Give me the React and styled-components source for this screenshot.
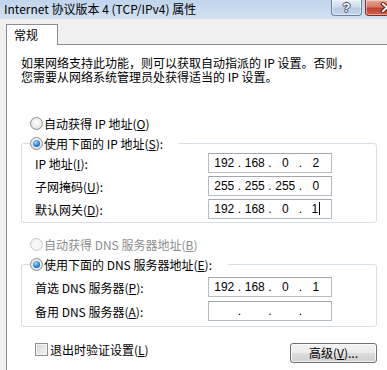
import React from 'react';
import styled, { createGlobalStyle } from 'styled-components';

const GlobalStyle = createGlobalStyle`
  body {
    margin: 0;
    overflow: hidden;
    background: #f0f0f0;
  }
`;

const Window = styled.div`
  width: 387px;
  height: 370px;
  overflow: hidden;
  display: flex;
  flex-direction: column;
  background: #f0f0f0;
  font-family: "Noto Sans CJK SC", "Liberation Sans", sans-serif;
  font-size: 12px;
  color: #000;
`;

const TitleBar = styled.div`
  height: 19px;
  flex: none;
  display: flex;
  align-items: flex-start;
  background: linear-gradient(to bottom, #c0d4ec, #d3e1f1);
`;

const Title = styled.div`
  flex: 1;
  padding-left: 4px;
  line-height: 17px;
  white-space: nowrap;
`;

const CaptionButton = styled.div`
  flex: none;
  width: ${({ $w }) => $w}px;
  height: 16px;
  box-sizing: border-box;
  margin-right: ${({ $mr }) => $mr}px;
  border: 1px solid ${({ $close }) => ($close ? '#7a3226' : '#6f8198')};
  border-top: none;
  border-radius: 0 0 4px 4px;
  box-shadow: inset 0 0 0 1px rgba(255, 255, 255, 0.45);
  background: ${({ $close }) =>
    $close
      ? 'linear-gradient(to bottom, #e8a696 0%, #d67a66 45%, #c2422c 55%, #cf6450 100%)'
      : 'linear-gradient(to bottom, #e6eef7 0%, #cddcee 45%, #b7cbe3 55%, #c6d7eb 100%)'};
  display: flex;
  align-items: center;
  justify-content: center;
`;

const HelpGlyph = styled.span`
  font-family: "Liberation Sans", sans-serif;
  font-weight: bold;
  font-size: 13px;
  line-height: 14px;
  color: #fff;
  text-shadow: 1px 0 0 #3b4b61, -1px 0 0 #3b4b61, 0 1px 0 #3b4b61, 0 -1px 0 #3b4b61;
`;

const Body = styled.div`
  flex: 1;
  display: flex;
  flex-direction: column;
  padding: 5px 0 0 6px;
`;

const TabStrip = styled.div`
  display: flex;
  position: relative;
  z-index: 1;
  margin-bottom: -1px;
`;

const Tab = styled.div`
  width: 52px;
  height: 21px;
  box-sizing: border-box;
  border: 1px solid #898c95;
  border-bottom: none;
  background: #fff;
  padding-left: 7px;
  line-height: 20px;
`;

const Panel = styled.div`
  flex: 1;
  background: #fff;
  border-top: 1px solid #898c95;
  border-left: 1px solid #898c95;
  padding: 11px 0 0 14px;
`;

const Content = styled.div`
  width: 356px;
  display: flex;
  flex-direction: column;
`;

const Description = styled.p`
  margin: 0;
  line-height: 14px;
  white-space: nowrap;
`;

const OptionRow = styled.div`
  height: ${({ $h }) => $h || 19}px;
  margin-top: ${({ $mt }) => $mt || 0}px;
  padding-left: ${({ $pl }) => ($pl === undefined ? 9 : $pl)}px;
  display: flex;
  align-items: center;
  gap: 1px;
  white-space: nowrap;
  color: ${({ $disabled }) => ($disabled ? '#8d8d8d' : '#000')};
`;

const Radio = styled.span`
  flex: none;
  width: 13px;
  height: 13px;
  box-sizing: border-box;
  border-radius: 50%;
  border: 1px solid ${({ $disabled }) => ($disabled ? '#c9c9c9' : '#8b8e93')};
  background: ${({ $disabled }) =>
    $disabled
      ? 'radial-gradient(circle at 50% 45%, #fafafa 0%, #eeeeee 100%)'
      : 'radial-gradient(circle at 50% 40%, #ffffff 0%, #e4e4e4 70%, #cfcfcf 100%)'};
  display: flex;
  align-items: center;
  justify-content: center;

  &::after {
    content: '';
    display: ${({ $checked }) => ($checked ? 'block' : 'none')};
    width: 7px;
    height: 7px;
    border-radius: 50%;
    background: radial-gradient(circle at 40% 35%, #a8dcff 0%, #3a8fe0 45%, #0c3f82 100%);
  }
`;

const Group = styled.fieldset`
  margin: 0;
  padding: ${({ $pt }) => $pt}px 0 ${({ $pb }) => $pb}px 8px;
  border: 1px solid #d5dfe5;
  border-radius: 3px;
  min-width: 0;
`;

const Legend = styled.legend`
  padding: 0 16px 0 0;
  margin: 0;
  height: 20px;
  display: flex;
  align-items: center;
  gap: 1px;
  white-space: nowrap;
`;

const Fields = styled.div`
  display: flex;
  flex-direction: column;
  gap: ${({ $gap }) => $gap}px;
  padding: 0 44px 0 5px;
`;

const FieldRow = styled.div`
  display: flex;
  align-items: center;
  justify-content: space-between;
  white-space: nowrap;
`;

const IpBox = styled.div`
  width: 124px;
  height: 20px;
  box-sizing: border-box;
  border: 1px solid #b7bbc2;
  border-top-color: #a2a7ae;
  background: #fff;
  display: flex;
  align-items: center;
  padding: 0 2px;
  font-family: "Liberation Sans", sans-serif;
  font-size: 12px;
`;

const Octet = styled.span`
  flex: 1;
  text-align: center;
`;

const Dot = styled.span`
  width: 4px;
  text-align: center;
`;

const Caret = styled.span`
  display: inline-block;
  width: 1px;
  height: 13px;
  margin-left: 1px;
  background: #000;
  vertical-align: -2px;
`;

const Footer = styled.div`
  margin-top: 15px;
  display: flex;
  align-items: flex-start;
  justify-content: space-between;
`;

const CheckRow = styled.label`
  display: flex;
  align-items: center;
  gap: 2px;
  height: 14px;
  padding-left: 14px;
  white-space: nowrap;
`;

const Checkbox = styled.span`
  flex: none;
  width: 13px;
  height: 13px;
  box-sizing: border-box;
  border: 1px solid #8e8f8f;
  background: linear-gradient(135deg, #d6d6d6 0%, #f4f4f4 100%);
  box-shadow: inset 0 0 0 1px #f4f4f4;
`;

const Button = styled.button`
  margin: 1px 0 0;
  width: 87px;
  height: 20px;
  padding: 0;
  border: 1px solid #707070;
  border-radius: 3px;
  background: linear-gradient(to bottom, #f2f2f2 0%, #ebebeb 50%, #dddddd 51%, #cfcfcf 100%);
  box-shadow: inset 0 0 0 1px rgba(255, 255, 255, 0.7);
  font-family: "Noto Sans CJK SC", "Liberation Sans", sans-serif;
  font-size: 12px;
  color: #000;
  line-height: 16px;
`;

const CloseIcon = () => (
  <svg width="14" height="11" viewBox="0 0 14 11">
    <path d="M3 2 L11 9 M11 2 L3 9" stroke="#5a231b" strokeWidth="4" strokeLinecap="square" />
    <path d="M3 2 L11 9 M11 2 L3 9" stroke="#fff" strokeWidth="2" strokeLinecap="square" />
  </svg>
);

const IpField = ({ parts, caret }) => (
  <IpBox>
    {parts.map((p, i) => (
      <React.Fragment key={i}>
        {i > 0 && <Dot>.</Dot>}
        <Octet>
          {p}
          {caret && i === parts.length - 1 ? <Caret /> : null}
        </Octet>
      </React.Fragment>
    ))}
  </IpBox>
);

export default function App() {
  return (
    <>
      <GlobalStyle />
      <Window>
        <TitleBar>
          <Title>Internet 协议版本 4 (TCP/IPv4) 属性</Title>
          <CaptionButton $w={31} $mr={3}>
            <HelpGlyph>?</HelpGlyph>
          </CaptionButton>
          <CaptionButton $w={43} $mr={-21} $close>
            <CloseIcon />
          </CaptionButton>
        </TitleBar>
        <Body>
          <TabStrip>
            <Tab>常规</Tab>
          </TabStrip>
          <Panel>
            <Content>
              <Description>
                如果网络支持此功能，则可以获取自动指派的 IP 设置。否则，
                <br />
                您需要从网络系统管理员处获得适当的 IP 设置。
              </Description>

              <OptionRow $mt={29} $h={20}>
                <Radio />
                <span>自动获得 IP 地址(<u>O</u>)</span>
              </OptionRow>
              <Group $pt={0} $pb={3}>
                <Legend>
                  <Radio $checked />
                  <span>使用下面的 IP 地址(<u>S</u>):</span>
                </Legend>
                <Fields $gap={3}>
                  <FieldRow>
                    <span>IP 地址(<u>I</u>):</span>
                    <IpField parts={['192', '168', '0', '2']} />
                  </FieldRow>
                  <FieldRow>
                    <span>子网掩码(<u>U</u>):</span>
                    <IpField parts={['255', '255', '255', '0']} />
                  </FieldRow>
                  <FieldRow>
                    <span>默认网关(<u>D</u>):</span>
                    <IpField parts={['192', '168', '0', '1']} caret />
                  </FieldRow>
                </Fields>
              </Group>

              <OptionRow $mt={12} $disabled>
                <Radio $disabled />
                <span>自动获得 DNS 服务器地址(<u>B</u>)</span>
              </OptionRow>
              <Group $pt={3} $pb={5}>
                <Legend>
                  <Radio $checked />
                  <span>使用下面的 DNS 服务器地址(<u>E</u>):</span>
                </Legend>
                <Fields $gap={4}>
                  <FieldRow>
                    <span>首选 DNS 服务器(<u>P</u>):</span>
                    <IpField parts={['192', '168', '0', '1']} />
                  </FieldRow>
                  <FieldRow>
                    <span>备用 DNS 服务器(<u>A</u>):</span>
                    <IpField parts={['', '', '', '']} />
                  </FieldRow>
                </Fields>
              </Group>

              <Footer>
                <CheckRow>
                  <Checkbox />
                  <span>退出时验证设置(<u>L</u>)</span>
                </CheckRow>
                <Button>高级(<u>V</u>)...</Button>
              </Footer>
            </Content>
          </Panel>
        </Body>
      </Window>
    </>
  );
}
